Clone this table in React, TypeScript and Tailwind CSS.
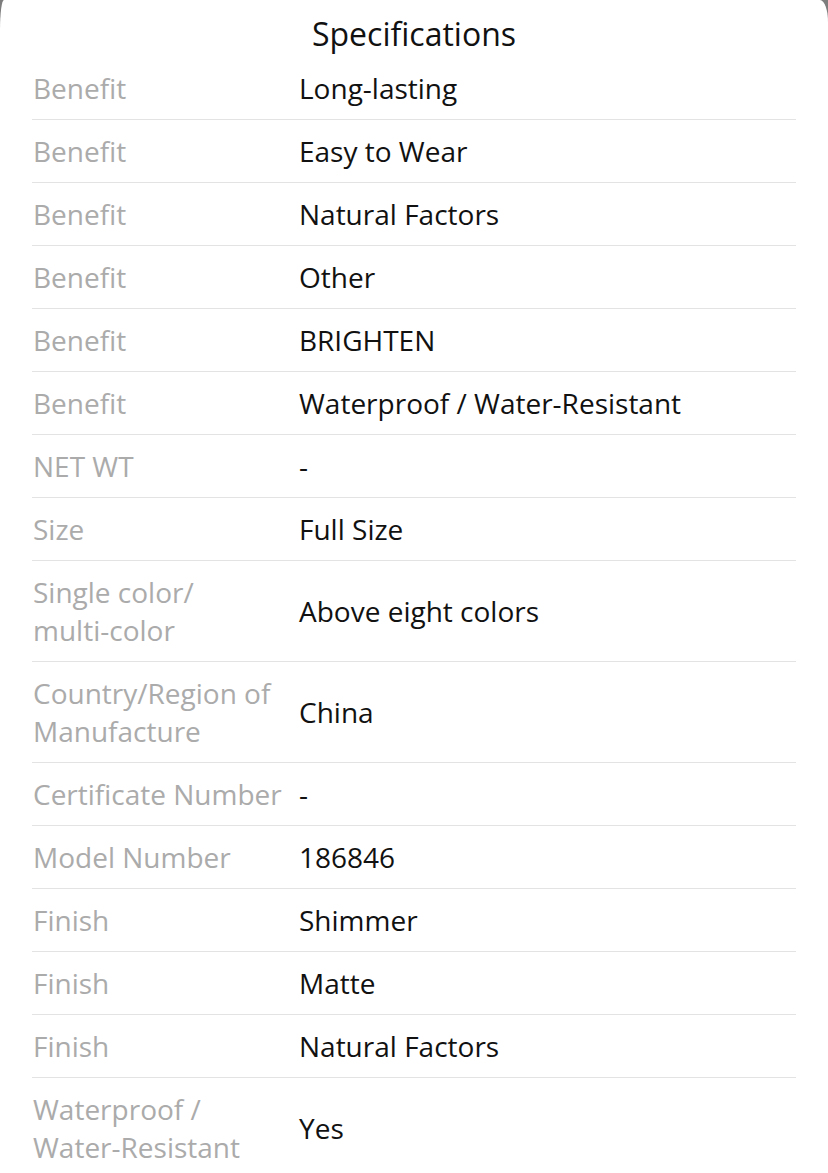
import React from "react";

const rows: [string, string][] = [
  ["Benefit", "Long-lasting"],
  ["Benefit", "Easy to Wear"],
  ["Benefit", "Natural Factors"],
  ["Benefit", "Other"],
  ["Benefit", "BRIGHTEN"],
  ["Benefit", "Waterproof / Water-Resistant"],
  ["NET WT", "-"],
  ["Size", "Full Size"],
  ["Single color/\nmulti-color", "Above eight colors"],
  ["Country/Region of\nManufacture", "China"],
  ["Certificate Number", "-"],
  ["Model Number", "186846"],
  ["Finish", "Shimmer"],
  ["Finish", "Matte"],
  ["Finish", "Natural Factors"],
  ["Waterproof /\nWater-Resistant", "Yes"],
];

export default function App() {
  return (
    <div className="w-[828px] h-[1173px] overflow-hidden bg-[#7d7d7d]" style={{ fontFamily: '"Open Sans", "Noto Sans", sans-serif' }}>
      <div className="bg-white h-full rounded-tl-[4px_30px] rounded-tr-[8px_22px]">
        <div className="pt-[13px] pb-[2px] text-center text-[32px] leading-[42px] text-[#111]">Specifications</div>
        <div className="px-[32px]">
          {rows.map(([k, v], i) => (
            <div key={i} className="grid grid-cols-[267px_1fr] border-b border-[#e3e3e3] py-[12px]">
              <div className="pl-[1px] whitespace-pre-line text-[28px] leading-[38px] text-[#ababab]">{k}</div>
              <div className="flex items-center text-[28px] leading-[38px] text-[#111]">{v}</div>
            </div>
          ))}
        </div>
      </div>
    </div>
  );
}
